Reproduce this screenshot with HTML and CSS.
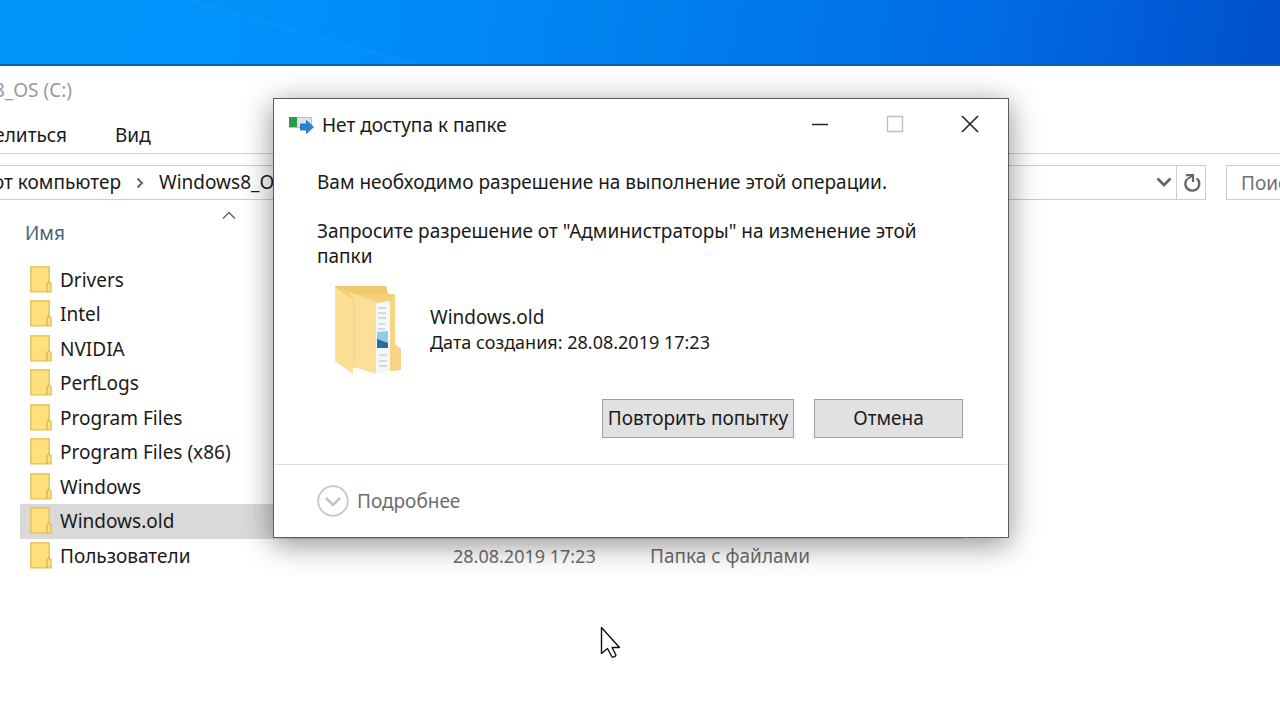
FILE: index.html
```html
<!DOCTYPE html>
<html lang="ru">
<head>
<meta charset="utf-8">
<meta name="viewport" content="width=device-width, initial-scale=1">
<title>Нет доступа к папке</title>
<link rel="stylesheet" href="styles.css">
</head>
<body>
<svg class="defs" aria-hidden="true">
  <symbol id="folder" viewBox="0 0 22 27">
    <path d="M.8.8h18.4v15.7l1.800 1v8.400H.8z" fill="#ffe07c" stroke="#e3bd52" stroke-width="1.300"/>
    <path d="M17 26v-8l2.200-2.500" fill="none" stroke="#dfb445" stroke-width="1.300"/>
  </symbol>
</svg>
<div class="desktop">
  <div class="wallpaper">
    <svg class="beam" viewBox="0 0 1280 65" preserveAspectRatio="none" aria-hidden="true">
      <path d="M0 0H180L415 65H0z" fill="#0096ff" opacity=".35"/>
      <path d="M175 0h22l224 65h-12z" fill="#2ba4ff" opacity=".15"/>
    </svg>
  </div>

  <main class="explorer">
    <div class="titlebar"><span>Windows8_OS (C:)</span></div>
    <nav class="ribbon">
      <button class="tab tab-share" type="button">Поделиться</button>
      <button class="tab" type="button">Вид</button>
    </nav>
    <div class="location">
      <div class="address">
        <a class="crumb crumb-root" href="#">Этот компьютер</a>
        <svg class="crumb-arrow" width="8" height="12" viewBox="0 0 8 12" aria-hidden="true"><path d="M1.500 1.500L6 6l-4.500 4.500" fill="none" stroke="#666" stroke-width="2"/></svg>
        <a class="crumb" href="#">Windows8_OS (C:)</a>
        <button class="drop" type="button" aria-label="Предыдущие расположения"><svg width="16" height="11" viewBox="0 0 16 11"><path d="M1.500 1.500L8 8l6.500-6.500" fill="none" stroke="#666" stroke-width="2.800"/></svg></button>
        <button class="refresh" type="button" aria-label="Обновить"><svg width="18" height="20" viewBox="0 0 18 20"><path d="M13.800 5.300A7 7 0 1 1 3.900 6.200" fill="none" stroke="#666" stroke-width="2.400"/><path d="M3 2.200h7v6.800" fill="none" stroke="#666" stroke-width="2.200"/><path d="M4 6.200L9.500 2.700" stroke="#666" stroke-width="1.800"/></svg></button>
      </div>
      <input class="search" type="text" placeholder="Поиск" aria-label="Поиск">
    </div>

    <table class="files">
      <colgroup><col class="col-name"><col class="col-date"><col></colgroup>
      <thead>
        <tr><th scope="col"><span class="heading"><svg class="sort" width="14" height="9" viewBox="0 0 14 9" aria-hidden="true"><path d="M1 7.500l6-6 6 6" fill="none" stroke="#666" stroke-width="1.500"/></svg>Имя</span></th><td></td><td></td></tr>
      </thead>
      <tbody>
        <tr><td><span class="name"><svg class="icon"><use href="#folder"/></svg>Drivers</span></td><td></td><td></td></tr>
        <tr><td><span class="name"><svg class="icon"><use href="#folder"/></svg>Intel</span></td><td></td><td></td></tr>
        <tr><td><span class="name"><svg class="icon"><use href="#folder"/></svg>NVIDIA</span></td><td></td><td></td></tr>
        <tr><td><span class="name"><svg class="icon"><use href="#folder"/></svg>PerfLogs</span></td><td></td><td></td></tr>
        <tr><td><span class="name"><svg class="icon"><use href="#folder"/></svg>Program Files</span></td><td></td><td></td></tr>
        <tr><td><span class="name"><svg class="icon"><use href="#folder"/></svg>Program Files (x86)</span></td><td></td><td></td></tr>
        <tr><td><span class="name"><svg class="icon"><use href="#folder"/></svg>Windows</span></td><td></td><td></td></tr>
        <tr class="selected"><td><span class="name"><svg class="icon"><use href="#folder"/></svg>Windows.old</span></td><td></td><td></td></tr>
        <tr><td><span class="name"><svg class="icon"><use href="#folder"/></svg>Пользователи</span></td><td class="date">28.08.2019 17:23</td><td>Папка с файлами</td></tr>
      </tbody>
    </table>
  </main>

  <section class="dialog" role="dialog" aria-labelledby="dialog-title">
    <header class="dialog-bar">
      <svg width="25" height="18" viewBox="0 0 25 18" aria-hidden="true">
        <rect x=".5" y="1.500" width="22" height="10" fill="#dfe3e8" stroke="#bcc2ca"/>
        <path d="M0 1h8v10H0z" fill="#2f9a45"/>
        <path d="M11.500 8h6V4.500L24.500 11l-7 6.500V14h-6z" fill="#2684d6" stroke="#1868b0" stroke-width=".8"/>
      </svg>
      <h1 class="dialog-title" id="dialog-title">Нет доступа к папке</h1>
      <div class="controls">
        <button type="button" aria-label="Свернуть"><svg width="18" height="18" viewBox="0 0 18 18"><path d="M1 9.500h16" stroke="#222" stroke-width="1.500"/></svg></button>
        <button type="button" aria-label="Развернуть" disabled><svg width="18" height="18" viewBox="0 0 18 18"><path d="M1.500 1.500h15v15h-15z" fill="none" stroke="#bdbdbd" stroke-width="1.300"/></svg></button>
        <button type="button" aria-label="Закрыть"><svg width="18" height="18" viewBox="0 0 18 18"><path d="M1 1l16 16M17 1L1 17" stroke="#222" stroke-width="1.600"/></svg></button>
      </div>
    </header>
    <div class="dialog-body">
      <p class="lead">Вам необходимо разрешение на выполнение этой операции.</p>
      <p class="request">Запросите разрешение от "Администраторы" на изменение этой папки</p>
      <div class="item">
        <svg width="72" height="92" viewBox="0 0 72 92" aria-hidden="true">
          <path d="M2 2h51l2 8h7v50l6 5v21l-20 1z" fill="#f3d27a"/>
          <path d="M2 2h51l2 8H20z" fill="#efca6c"/>
          <path d="M43 19l14-2v70l-14 3z" fill="#f5f7f9"/>
          <path d="M45 24h8M45 29h8M45 34h8M45 40h7M45 45h7M46 71h8M46 77h8M46 82h8" stroke="#c9d1d9" stroke-width="1.500"/>
          <path d="M44 48l11-1v17H44z" fill="#8fcbef"/>
          <path d="M44 55l11 4v5H44z" fill="#2b6c98"/>
          <path d="M57 17l5-4v48l6 5v20l-11 1z" fill="#f6d684"/>
          <path d="M16 8l27 10v72l-22-7z" fill="#fce09a"/>
          <path d="M16 8l6 6v70l-6-2z" fill="#f8d887"/>
          <path d="M2 2l8 6 10 6v76L2 77z" fill="#fddf94"/>
          <path d="M2 2l8 6 10 6" fill="none" stroke="#e9c369"/>
        </svg>
        <div>Windows.old<br><span class="date">Дата создания: 28.08.2019 17:23</span></div>
      </div>
      <div class="actions">
        <button class="button" type="button">Повторить попытку</button>
        <button class="button cancel" type="button">Отмена</button>
      </div>
    </div>
    <footer class="dialog-foot">
      <button class="more" type="button">
        <svg width="32" height="32" viewBox="0 0 32 32" aria-hidden="true"><circle cx="16" cy="16" r="14.800" fill="#fff" stroke="#c6c6c6" stroke-width="1.800"/><path d="M9 13l7 7 7-7" fill="none" stroke="#c2c2c2" stroke-width="2.500"/></svg>
        Подробнее
      </button>
    </footer>
  </section>

  <svg class="cursor" width="22" height="34" viewBox="0 0 22 34" aria-hidden="true"><path d="M1.500 1.500v26l6-5 4.500 8.500q3 .5 4-2l-4-7.500h7.500z" fill="#fff" stroke="#111" stroke-width="1.400" stroke-linejoin="round"/></svg>
</div>
</body>
</html>
```
FILE: styles.css
```css
* {
  box-sizing: border-box;
}

body {
  margin: 0;
  font: 19px/25px "Noto Sans", "Open Sans", sans-serif;
  color: #1a1a1a;
}

button {
  padding: 0;
  border: 0;
  background: none;
  font: inherit;
  color: inherit;
}

svg {
  display: block;
  flex: none;
}

.defs {
  position: absolute;
  width: 0;
  height: 0;
}

.desktop {
  position: relative;
  display: flex;
  flex-direction: column;
  min-height: 100vh;
  overflow: hidden;
}

.wallpaper {
  height: 66px;
  border-bottom: 2px solid #0a5fae;
  background: linear-gradient(100deg, #0096f8 0%, #0090fa 25%, #0080ee 50%, #006ee6 75%, #0050cc 100%);
}

.beam {
  width: 100%;
  height: 100%;
}

.explorer {
  flex: 1;
  background: #fff;
}

.titlebar {
  display: flex;
  justify-content: flex-end;
  width: 72px;
  padding: 12px 0;
  white-space: nowrap;
  color: #999;
}

.ribbon {
  display: flex;
  gap: 48px;
  height: 39px;
  padding-top: 8px;
  border-bottom: 1px solid #d0d0d0;
}

.tab {
  height: 25px;
}

.tab-share {
  display: flex;
  justify-content: flex-end;
  width: 67px;
}

.location {
  display: flex;
  gap: 20px;
  padding-top: 11px;
}

.address {
  display: flex;
  flex: 1;
  align-items: center;
  height: 35px;
  border: 1px solid #ccc;
  border-left: 0;
}

.crumb {
  white-space: nowrap;
  color: inherit;
  text-decoration: none;
}

.crumb-root {
  display: flex;
  justify-content: flex-end;
  width: 121px;
}

.crumb-arrow {
  margin: 0 15px;
}

.drop {
  margin-left: auto;
  padding: 4px;
}

.refresh {
  display: flex;
  align-items: center;
  justify-content: center;
  align-self: stretch;
  width: 29px;
  padding-left: 2px;
  border-left: 1px solid #ccc;
}

.search {
  width: 54px;
  height: 35px;
  padding: 0 0 0 14px;
  border: 1px solid #ccc;
  border-right: 0;
  border-radius: 0;
  font: inherit;
}

.search::placeholder {
  color: #707070;
  opacity: 1;
}

.files {
  width: 942px;
  margin-left: 20px;
  border-collapse: collapse;
  table-layout: fixed;
  color: #6d6d6d;
}

.files td,
.files th {
  padding: 0;
  font-weight: 400;
  text-align: left;
}

.col-name {
  width: 433px;
}

.col-date {
  width: 197px;
}

.heading {
  display: flex;
  flex-direction: column;
  gap: 1px;
  height: 63px;
  padding: 11px 20px 0 5px;
  color: #4c607a;
}

.sort {
  align-self: center;
}

.files tbody tr {
  height: 34px;
}

.files tbody tr:nth-child(even) {
  height: 35px;
}

.files .selected {
  background: #d9d9d9;
}

.files .date,
.date {
  font-size: 18px;
}

.name {
  display: flex;
  align-items: center;
  gap: 8px;
  padding-left: 10px;
  color: #1a1a1a;
}

.icon {
  width: 22px;
  height: 27px;
  margin-bottom: 2px;
}

.dialog {
  position: absolute;
  top: 98px;
  left: 273px;
  width: 736px;
  padding: 1px;
  border: 1px solid #5c5c5c;
  background: #fff;
  box-shadow: 0 6px 28px rgba(0, 0, 0, 0.45);
}

.dialog-bar {
  display: flex;
  align-items: center;
  gap: 8px;
  height: 50px;
  padding-left: 14px;
}

.dialog-title {
  flex: 1;
  margin: 0;
  font: inherit;
}

.controls {
  display: flex;
  align-self: flex-start;
}

.controls button {
  display: flex;
  align-items: center;
  justify-content: center;
  width: 75px;
  height: 48px;
}

.dialog-body {
  padding: 20px 44px 26px 42px;
}

.lead,
.request {
  margin: 0 0 24px;
}

.request {
  margin-bottom: 15px;
}

.item {
  display: flex;
  align-items: center;
  gap: 25px;
  padding-left: 16px;
}

.actions {
  display: flex;
  justify-content: flex-end;
  gap: 20px;
  margin-top: 23px;
}

.button {
  width: 192px;
  height: 39px;
  border: 1px solid #a0a0a0;
  background: #e1e1e1;
  white-space: nowrap;
}

.cancel {
  width: 149px;
}

.dialog-foot {
  padding: 20px 42px 19px;
  border-top: 1px solid #dcdcdc;
}

.more {
  display: flex;
  align-items: center;
  gap: 8px;
  color: #6d6d6d;
}

.cursor {
  position: absolute;
  top: 626px;
  left: 600px;
}
```
